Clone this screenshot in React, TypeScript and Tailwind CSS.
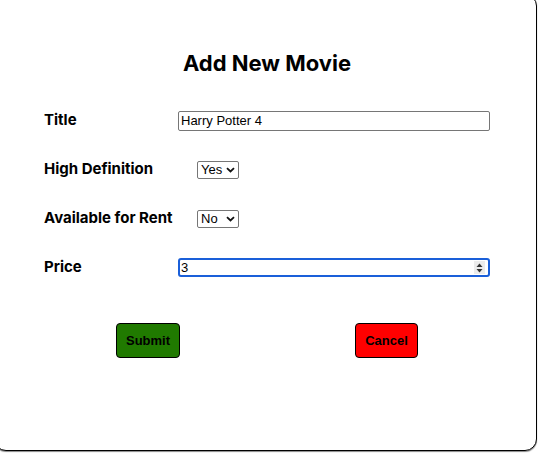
import { useState } from "react";

const labelClass =
  "w-[134px] shrink-0 text-[15px] font-bold text-black font-['Inter',sans-serif]";
const fieldFont = "font-['Liberation_Sans',Arial,sans-serif] text-[13px] text-black";

const Chevron = () => (
  <svg
    className="pointer-events-none absolute right-[4px] top-[6px]"
    width="9"
    height="6"
    viewBox="0 0 9 6"
  >
    <path d="M1 1.2 L4.5 4.5 L8 1.2" fill="none" stroke="#111" strokeWidth="1.8" />
  </svg>
);

const App = () => {
  const [title, setTitle] = useState<string>("Harry Potter 4");
  const [hd, setHd] = useState<string>("Yes");
  const [rent, setRent] = useState<string>("No");
  const [price, setPrice] = useState<string>("3");

  return (
    <div className="w-[558px] h-[460px] overflow-hidden bg-white">
      <div className="-ml-[6px] -mt-[6px] w-[543px] h-[457px] bg-white border border-black rounded-[12px] shadow-[0_1px_1px_#888] flex flex-col">
        <h1 className="mt-[54px] text-center text-[22px] leading-[28px] font-bold text-black font-['Inter',sans-serif] pl-[3px]">
          Add New Movie
        </h1>

        <form className="mt-[19px] flex flex-col pl-[49px]" onSubmit={(e) => e.preventDefault()}>
          <div className="h-[49px] flex items-center">
            <label className={labelClass}>Title</label>
            <input
              type="text"
              value={title}
              onChange={(e) => setTitle(e.target.value)}
              className={`w-[312px] h-[20px] px-[2px] border border-[#767676] rounded-[2px] outline-none ${fieldFont}`}
            />
          </div>

          <div className="h-[49px] flex items-center">
            <label className={labelClass}>High Definition</label>
            <div className="relative ml-[19px]">
              <select
                value={hd}
                onChange={(e) => setHd(e.target.value)}
                className={`appearance-none block w-[42px] h-[18px] pl-[3px] leading-[16px] border border-[#767676] rounded-[2px] ${fieldFont}`}
              >
                <option>Yes</option>
                <option>No</option>
              </select>
              <Chevron />
            </div>
          </div>

          <div className="h-[49px] flex items-center">
            <label className={labelClass}>Available for Rent</label>
            <div className="relative ml-[19px]">
              <select
                value={rent}
                onChange={(e) => setRent(e.target.value)}
                className={`appearance-none block w-[42px] h-[18px] pl-[3px] leading-[16px] border border-[#767676] rounded-[2px] ${fieldFont}`}
              >
                <option>Yes</option>
                <option>No</option>
              </select>
              <Chevron />
            </div>
          </div>

          <div className="h-[49px] flex items-center">
            <label className={labelClass}>Price</label>
            <div className="relative">
              <input
                type="text"
                value={price}
                onChange={(e) => setPrice(e.target.value)}
                className={`block w-[312px] h-[19px] pl-[1px] leading-[15px] border-2 border-[#1a5fd9] rounded-[3px] outline-none ${fieldFont}`}
              />
              <div className="absolute right-[5px] top-[3px] w-[11px] h-[13px] bg-[#ececec] flex items-center justify-center">
                <svg width="7" height="10" viewBox="0 0 7 10">
                  <path d="M3.5 0.5 L6.5 4 H0.5 Z" fill="#333" />
                  <path d="M3.5 9.5 L6.5 6 H0.5 Z" fill="#333" />
                </svg>
              </div>
            </div>
          </div>

          <div className="mt-[31px] flex pl-[72px]">
            <button
              type="submit"
              className="w-[64px] h-[35px] bg-[#207a00] border border-black rounded-[4px] text-[13px] font-bold text-black font-['Liberation_Sans',Arial,sans-serif]"
            >
              Submit
            </button>
            <button
              type="button"
              className="ml-[175px] w-[63px] h-[35px] bg-[#ff0000] border border-black rounded-[4px] text-[13px] font-bold text-black font-['Liberation_Sans',Arial,sans-serif]"
            >
              Cancel
            </button>
          </div>
        </form>
      </div>
    </div>
  );
};

export default App;
